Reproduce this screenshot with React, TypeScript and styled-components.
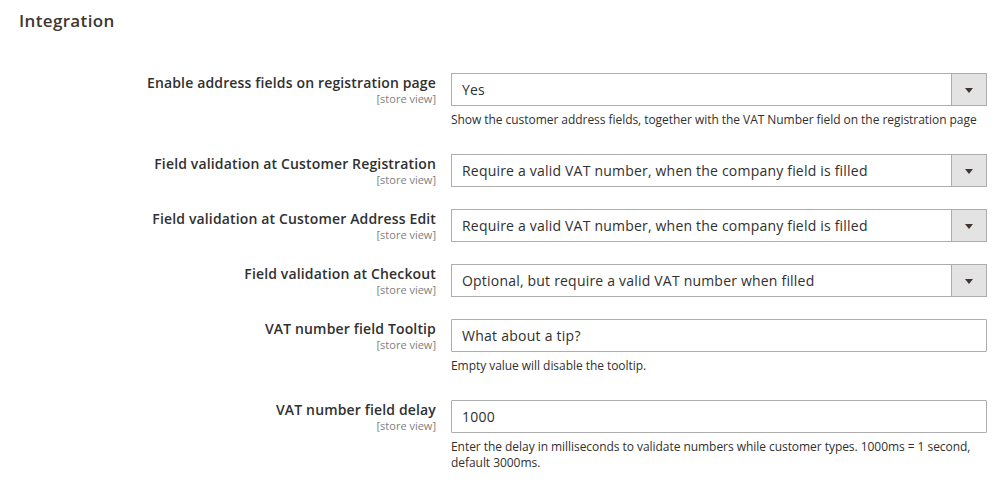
import React from "react";
import styled, { createGlobalStyle } from "styled-components";

const GlobalStyle = createGlobalStyle`
  html, body {
    margin: 0;
    padding: 0;
    background: #ffffff;
    font-family: "Open Sans", "Liberation Sans", sans-serif;
    color: #303030;
  }
`;

const Page = styled.div`
  width: 1005px;
  height: 490px;
  box-sizing: border-box;
  padding: 10px 0 0 0;
`;

const Title = styled.h3`
  margin: 0 0 41px 19px;
  font-size: 17px;
  font-weight: 600;
  line-height: 22px;
  color: #41362f;
  letter-spacing: 0.35px;
`;

const Fields = styled.div`
  display: flex;
  flex-direction: column;
  gap: 22px;
`;

const Row = styled.div`
  display: grid;
  grid-template-columns: 436px 536px;
  column-gap: 15px;
  align-items: start;
`;

const LabelCell = styled.div`
  display: flex;
  flex-direction: column;
  align-items: flex-end;
  text-align: right;
`;

const LabelText = styled.span`
  font-size: 14px;
  font-weight: 600;
  line-height: 19px;
  letter-spacing: 0.15px;
  color: #303030;
`;

const Scope = styled.span`
  font-size: 11px;
  line-height: 13px;
  color: #808080;
`;

const ControlCell = styled.div`
  display: flex;
  flex-direction: column;
`;

const SelectBox = styled.div`
  height: 33px;
  box-sizing: border-box;
  border: 1px solid #adadad;
  background: #ffffff;
  display: flex;
  align-items: center;
`;

const SelectValue = styled.span`
  flex: 1;
  padding-left: 10px;
  font-size: 14px;
  letter-spacing: 0.2px;
  color: #303030;
  line-height: 19px;
  white-space: nowrap;
`;

const ArrowButton = styled.span`
  width: 34px;
  align-self: stretch;
  border-left: 1px solid #adadad;
  background: #e3e3e3;
  display: flex;
  align-items: center;
  justify-content: center;
`;

const Arrow = styled.span`
  width: 0;
  height: 0;
  border-left: 4px solid transparent;
  border-right: 4px solid transparent;
  border-top: 5px solid #41362f;
  margin-top: 1px;
`;

const TextInput = styled.input`
  height: 33px;
  box-sizing: border-box;
  border: 1px solid #adadad;
  border-radius: 1px;
  padding: 0 10px;
  font-family: "Open Sans", "Liberation Sans", sans-serif;
  font-size: 14px;
  letter-spacing: 0.25px;
  color: #303030;
  outline: none;
  width: 100%;
`;

const Note = styled.p`
  margin: 6px 0 4px 0;
  font-size: 12px;
  line-height: 16px;
  letter-spacing: -0.05px;
  color: #303030;
`;

type Field = {
  label: string;
  kind: "select" | "input";
  value: string;
  note?: string;
};

const fields: Field[] = [
  {
    label: "Enable address fields on registration page",
    kind: "select",
    value: "Yes",
    note: "Show the customer address fields, together with the VAT Number field on the registration page",
  },
  {
    label: "Field validation at Customer Registration",
    kind: "select",
    value: "Require a valid VAT number, when the company field is filled",
  },
  {
    label: "Field validation at Customer Address Edit",
    kind: "select",
    value: "Require a valid VAT number, when the company field is filled",
  },
  {
    label: "Field validation at Checkout",
    kind: "select",
    value: "Optional, but require a valid VAT number when filled",
  },
  {
    label: "VAT number field Tooltip",
    kind: "input",
    value: "What about a tip?",
    note: "Empty value will disable the tooltip.",
  },
  {
    label: "VAT number field delay",
    kind: "input",
    value: "1000",
    note: "Enter the delay in milliseconds to validate numbers while customer types. 1000ms = 1 second, default 3000ms.",
  },
];

export default function App() {
  return (
    <Page>
      <GlobalStyle />
      <Title>Integration</Title>
      <Fields>
        {fields.map((f) => (
          <Row key={f.label}>
            <LabelCell>
              <LabelText>{f.label}</LabelText>
              <Scope>[store view]</Scope>
            </LabelCell>
            <ControlCell>
              {f.kind === "select" ? (
                <SelectBox>
                  <SelectValue>{f.value}</SelectValue>
                  <ArrowButton>
                    <Arrow />
                  </ArrowButton>
                </SelectBox>
              ) : (
                <TextInput defaultValue={f.value} />
              )}
              {f.note && <Note>{f.note}</Note>}
            </ControlCell>
          </Row>
        ))}
      </Fields>
    </Page>
  );
}
